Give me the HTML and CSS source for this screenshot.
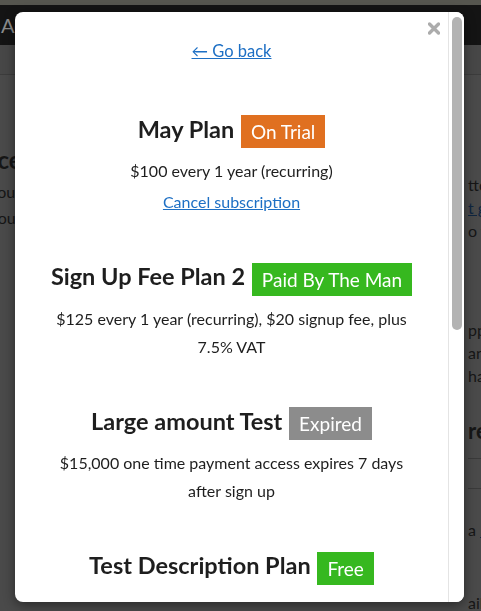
FILE: index.html
```html
<!DOCTYPE html>
<html lang="en">
<head>
    <meta charset="UTF-8">
    <meta name="viewport" content="width=device-width, initial-scale=1.0">
    <title>Subscriptions</title>
    <link rel="stylesheet" href="styles.css">
</head>
<body>
    <div class="page">
        <div class="top-strip"></div>
        <div class="header">Account</div>
        <div class="tabs"></div>
        <div class="page-main">
            <div class="page-left">
                <h2>Balance</h2>
                <p>Add to your</p>
                <p>Access your</p>
            </div>
            <div class="page-right">
                <p>ttom of</p>
                <p><a href="#">t green</a></p>
                <p>o your</p>
                <p class="gap-b">ppropriate</p>
                <p>and more</p>
                <p>hare it</p>
                <h3>re</h3>
                <div class="rule"></div>
                <div class="rule"></div>
                <p>a <a href="#">New</a></p>
                <p class="gap-c">ails</p>
            </div>
        </div>
    </div>

    <div class="modal">
        <button class="close" aria-label="Close">
            <svg width="12" height="13" viewBox="0 0 12 13"><path d="M1.5 2 L10.5 11 M10.5 2 L1.5 11" stroke="#acacac" stroke-width="3.4" stroke-linecap="round"/></svg>
        </button>
        <div class="modal-body">
            <a class="back" href="#">&larr; Go back</a>

            <div class="plan">
                <h2>May Plan <span class="badge trial">On Trial</span></h2>
                <p>$100 every 1 year (recurring)</p>
                <p class="action"><a href="#">Cancel subscription</a></p>
            </div>

            <div class="plan">
                <h2>Sign Up Fee Plan 2 <span class="badge paid">Paid By The Man</span></h2>
                <p>$125 every 1 year (recurring), $20 signup fee, plus 7.5% VAT</p>
            </div>

            <div class="plan">
                <h2>Large amount Test <span class="badge expired">Expired</span></h2>
                <p>$15,000 one time payment access expires 7 days after sign up</p>
            </div>

            <div class="plan">
                <h2>Test Description Plan <span class="badge paid">Free</span></h2>
                <p>Free forever, includes access to all the test content</p>
            </div>

            <div class="plan">
                <h2>Monthly Plan <span class="badge expired">Cancelled</span></h2>
                <p>$10 every 1 month (recurring)</p>
            </div>
        </div>
        <div class="scroll-track">
            <div class="scroll-thumb"></div>
        </div>
    </div>
</body>
</html>
```

FILE: styles.css
```css
* {
    box-sizing: border-box;
}
body {
    margin: 0;
    font-family: Lato, "Open Sans", sans-serif;
    background-color: #4a4a4a;
    overflow: hidden;
}
.page {
    height: 611px;
    overflow: hidden;
}
.top-strip {
    height: 5px;
    background: #56564f;
}
.header {
    height: 40px;
    background: #141414;
    color: #8c8c8c;
    font-size: 20px;
    line-height: 40px;
    padding-left: 1px;
}
.tabs {
    height: 30px;
    background: #474747;
    border-bottom: 1px solid #3c3c3c;
}
.page-main {
    display: flex;
    color: #161616;
}
.page-left {
    flex: none;
    width: 530px;
    margin-left: -62px;
    padding-top: 70px;
    white-space: nowrap;
}
.page-left h2 {
    margin: 0 0 4px;
    font-size: 24px;
    line-height: 30px;
}
.page-left p {
    margin: 0;
    font-size: 16px;
    line-height: 26px;
}
.page-right {
    flex: 1;
    white-space: nowrap;
    font-size: 16px;
    padding-top: 98px;
}
.page-right p {
    margin: 0;
    line-height: 23px;
}
.page-right a {
    color: #102640;
}
.page-right h3 {
    margin: 30px 0 14px;
    font-size: 22px;
}
.page-right .rule {
    height: 30px;
    border-top: 1px solid #3a3a3a;
}
.gap-b {
    margin-top: 76px !important;
}
.gap-c {
    margin-top: 50px !important;
}

.modal {
    position: fixed;
    left: 15px;
    top: 12px;
    width: 449px;
    height: 590px;
    background: #fff;
    border-radius: 8px;
    box-shadow: 0 3px 12px rgba(0,0,0,0.45);
    overflow: hidden;
}
.close {
    position: absolute;
    top: 10px;
    right: 24px;
    padding: 0;
    border: none;
    background: none;
    cursor: pointer;
    line-height: 0;
}
.modal-body {
    height: 100%;
    overflow: hidden;
    padding: 27px 16px 40px 0;
    text-align: center;
    color: #1e1e1e;
}
.scroll-track {
    position: absolute;
    top: 0;
    right: 0;
    bottom: 0;
    width: 16px;
    background: #fff;
    border-left: 1px solid #e4e4e4;
}
.scroll-thumb {
    margin: 5px 2px 0 3px;
    height: 313px;
    background: #b3b3b3;
    border-radius: 5px;
}
.back {
    display: inline-block;
    font-size: 16.5px;
    line-height: 24px;
    color: #1d6fc4;
}
.plan {
    margin-top: 48px;
    padding: 0 28px;
}
.plan + .plan {
    margin-top: 42px;
}
.plan h2 {
    margin: 0 0 9px;
    font-size: 23.5px;
    line-height: 36px;
    font-weight: 700;
    color: #1e1e1e;
}
.plan p {
    margin: 0;
    font-size: 16px;
    line-height: 28px;
}
.plan .action {
    margin-top: 3px;
}
.plan a {
    color: #1d6fc4;
}
.badge {
    display: inline-block;
    vertical-align: middle;
    margin-left: 1px;
    padding: 0 10px;
    font-size: 19px;
    font-weight: 400;
    line-height: 33px;
    color: #fff;
}
.trial {
    background: #e07020;
}
.paid {
    background: #36b81f;
}
.expired {
    background: #8c8c8c;
}
```
